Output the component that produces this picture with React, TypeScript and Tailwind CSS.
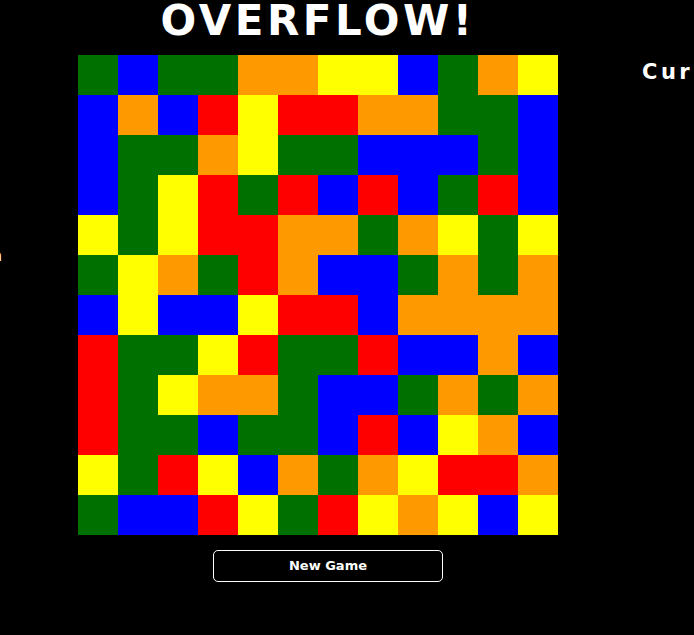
import React from 'react';

const colorClass: Record<string, string> = {
  G: 'bg-[#007000]',
  B: 'bg-[#0000ff]',
  O: 'bg-[#ff9900]',
  Y: 'bg-[#ffff00]',
  R: 'bg-[#ff0000]',
};

const board = [
  'GBGGOOYYBGOY',
  'BOBRYRROOGGB',
  'BGGOYGGBBBGB',
  'BGYRGRBRBGRB',
  'YGYRROOGOYGY',
  'GYOGROBBGOGO',
  'BYBBYRRBOOOO',
  'RGGYRGGRBBOB',
  'RGYOOGBBGOGO',
  'RGGBGGBRBYOB',
  'YGRYBOGOYRRO',
  'GBBRYGRYOYBY',
];

const font = { fontFamily: '"DejaVu Sans", "Liberation Sans", sans-serif' };

export default function App() {
  return (
    <div className="h-screen bg-black text-white overflow-hidden flex justify-center items-start" style={font}>
      {/* left panel, mostly off screen */}
      <div className="w-[200px] shrink-0 mr-[74px] mt-[249px] pr-[2px] text-right text-[15px] leading-none font-bold">
        Your turn
      </div>

      {/* board */}
      <div className="w-[480px] shrink-0 flex flex-col items-center">
        <h1 className="text-[42px] leading-[42px] font-bold tracking-[3.5px] mb-[13px]">OVERFLOW!</h1>
        <div className="grid grid-cols-12 w-[480px] h-[480px]">
          {board.map((row, r) =>
            row.split('').map((c, i) => (
              <div key={r + '-' + i} className={`w-[40px] h-[40px] ${colorClass[c]}`} />
            ))
          )}
        </div>
        <button className="mt-[15px] ml-[20px] w-[230px] h-[32px] rounded-[5px] border border-white bg-black text-white text-[13px] font-bold">
          New Game
        </button>
      </div>

      {/* right panel, mostly off screen */}
      <div className="w-[248px] shrink-0 ml-[84px] mt-[62px] text-[21px] leading-none font-bold tracking-[3.5px]">
        Current: 0
      </div>
    </div>
  );
}
